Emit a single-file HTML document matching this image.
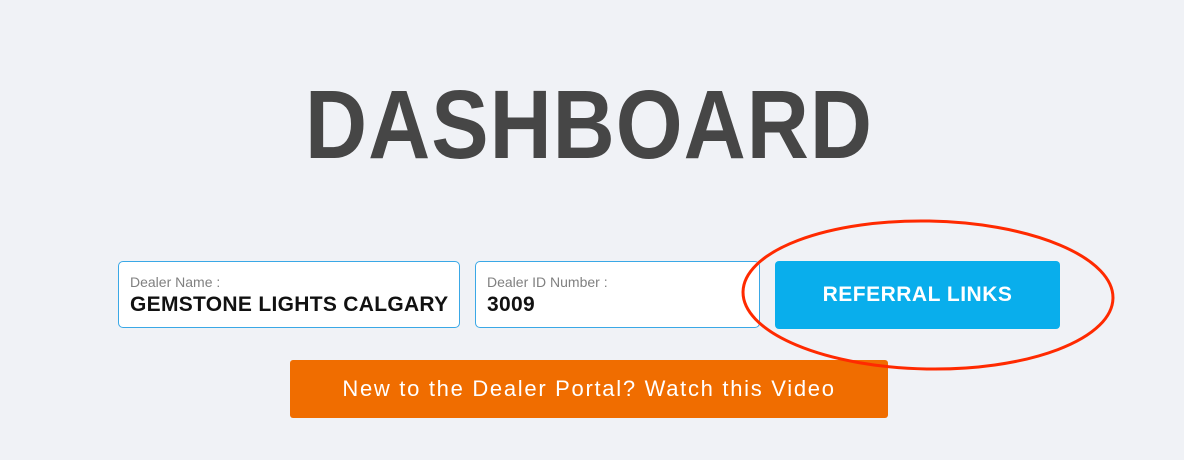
<!DOCTYPE html>
<html><head><style>
body{margin:0;width:1184px;height:460px;background:#f0f2f6;font-family:"Liberation Sans",sans-serif;position:relative;overflow:hidden}
.h{position:absolute;left:0;width:1184px;top:75px;text-align:center;font-size:86px;font-weight:bold;color:#464646;letter-spacing:1px;line-height:100px;transform:scaleY(1.13);padding-right:6px;box-sizing:border-box}
.box{position:absolute;top:261px;height:67px;background:#fff;border:1px solid #3aa8e6;border-radius:5px;box-sizing:border-box}
.lab{position:absolute;left:11px;top:12px;font-size:14px;color:#808080}
.val{position:absolute;left:11px;top:31px;font-size:21px;font-weight:bold;color:#111;letter-spacing:0.3px}
.btn{position:absolute;left:775px;top:261px;width:285px;height:68px;background:#09aeec;border-radius:4px;color:#fff;font-weight:bold;font-size:21px;text-align:center;line-height:68px;letter-spacing:0.5px}
.vid{position:absolute;left:290px;top:360px;width:598px;height:58px;background:#f06d00;border-radius:3px;color:#fff;font-size:22px;text-align:center;line-height:58px;letter-spacing:1.7px}
</style></head><body>
<div class="h">DASHBOARD</div>
<div class="box" style="left:118px;width:342px"><div class="lab">Dealer Name :</div><div class="val">GEMSTONE LIGHTS CALGARY</div></div>
<div class="box" style="left:475px;width:285px"><div class="lab">Dealer ID Number :</div><div class="val">3009</div></div>
<div class="btn">REFERRAL LINKS</div>
<div class="vid">New to the Dealer Portal? Watch this Video</div>
<svg style="position:absolute;left:0;top:0" width="1184" height="460"><ellipse cx="928" cy="295" rx="185" ry="74" fill="none" stroke="#ff2a00" stroke-width="3" transform="rotate(1 928 295)"/></svg>
</body></html>
